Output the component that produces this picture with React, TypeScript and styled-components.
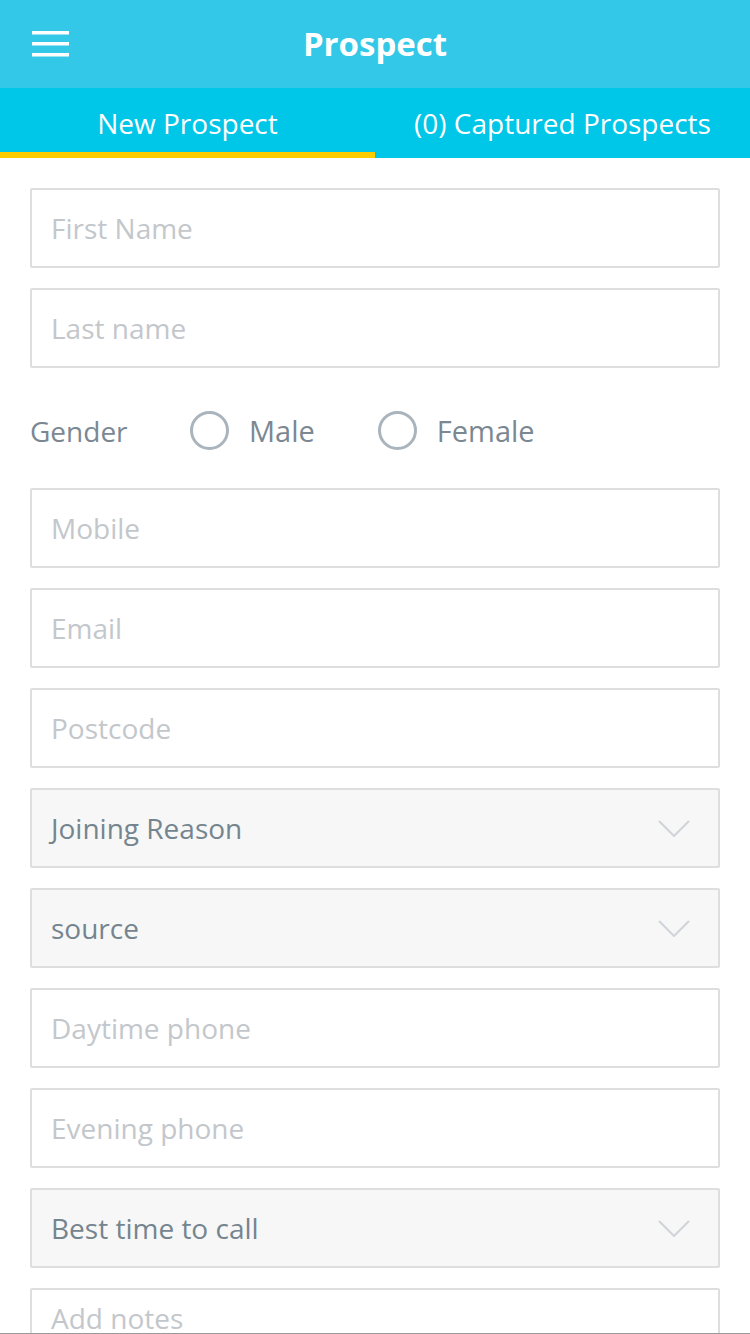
import React from "react";
import styled, { createGlobalStyle } from "styled-components";

const GlobalStyle = createGlobalStyle`
  html, body {
    margin: 0;
    padding: 0;
    background: #ffffff;
    font-family: "Open Sans", "Noto Sans", sans-serif;
  }
  * { box-sizing: border-box; }
`;

const Page = styled.div`
  width: 750px;
  height: 1334px;
  overflow: hidden;
  display: flex;
  flex-direction: column;
  background: #ffffff;
  border-bottom: 1px solid #9a9a9a;
`;

const Header = styled.header`
  height: 88px;
  flex-shrink: 0;
  background: #33c8e7;
  display: grid;
  grid-template-columns: 100px 1fr 100px;
  align-items: center;
`;

const MenuButton = styled.button`
  border: none;
  background: transparent;
  padding: 0 0 0 32px;
  height: 100%;
  display: flex;
  align-items: center;
  cursor: pointer;
`;

const Title = styled.h1`
  margin: 0;
  text-align: center;
  color: #ffffff;
  font-size: 33px;
  font-weight: 700;
  line-height: 88px;
`;

const Tabs = styled.nav`
  height: 70px;
  flex-shrink: 0;
  background: #00c6e8;
  display: grid;
  grid-template-columns: 1fr 1fr;
`;

const Tab = styled.div<{ $active?: boolean }>`
  display: flex;
  align-items: center;
  justify-content: center;
  color: #ffffff;
  font-size: 28px;
  padding-top: 6px;
  border-bottom: 6px solid ${(p) => (p.$active ? "#ffcc00" : "transparent")};
`;

const Form = styled.form`
  display: flex;
  flex-direction: column;
  gap: 20px;
  padding: 30px 30px 0;
  flex: 1;
  min-height: 0;
`;

const Field = styled.div<{ $select?: boolean }>`
  height: 80px;
  border: 2px solid #dedede;
  border-radius: 2px;
  background: ${(p) => (p.$select ? "#f7f7f7" : "#ffffff")};
  display: flex;
  align-items: center;
  justify-content: space-between;
  padding: 0 28px 0 19px;
  flex-shrink: 0;
`;

const NotesField = styled.div`
  height: 160px;
  border: 2px solid #dedede;
  border-radius: 2px;
  background: #ffffff;
  padding: 9px 19px 0;
  flex-shrink: 0;
`;

const FieldText = styled.span<{ $select?: boolean }>`
  font-size: 28px;
  line-height: 38px;
  color: ${(p) => (p.$select ? "#75858f" : "#c3c7cb")};
`;

const GenderRow = styled.div`
  height: 80px;
  display: flex;
  align-items: center;
  flex-shrink: 0;
  padding-top: 5px;
`;

const GenderLabel = styled.span`
  font-size: 28px;
  color: #7b8892;
  width: 160px;
`;

const RadioOption = styled.label`
  display: flex;
  align-items: center;
  gap: 20px;
  font-size: 29px;
  color: #7b8892;
  margin-right: 63px;
`;

const Circle = styled.span`
  width: 39px;
  height: 39px;
  border-radius: 50%;
  border: 3px solid #a9b4bc;
  display: inline-block;
`;

const Hamburger = () => (
  <svg width="37" height="26" viewBox="0 0 37 26">
    <rect x="0" y="0" width="37" height="3.5" fill="#fff" />
    <rect x="0" y="11" width="37" height="3.5" fill="#fff" />
    <rect x="0" y="22" width="37" height="3.5" fill="#fff" />
  </svg>
);

const Chevron = () => (
  <svg width="32" height="17" viewBox="0 0 32 17">
    <polyline points="1,1 16,16 31,1" fill="none" stroke="#d0d4d8" strokeWidth="2" />
  </svg>
);

type Item = { label: string; select?: boolean };

const before: Item[] = [{ label: "First Name" }, { label: "Last name" }];
const after: Item[] = [
  { label: "Mobile" },
  { label: "Email" },
  { label: "Postcode" },
  { label: "Joining Reason", select: true },
  { label: "source", select: true },
  { label: "Daytime phone" },
  { label: "Evening phone" },
  { label: "Best time to call", select: true },
];

const renderField = (f: Item) => (
  <Field key={f.label} $select={f.select}>
    <FieldText $select={f.select}>{f.label}</FieldText>
    {f.select && <Chevron />}
  </Field>
);

export default function App() {
  return (
    <Page>
      <GlobalStyle />
      <Header>
        <MenuButton type="button" aria-label="menu">
          <Hamburger />
        </MenuButton>
        <Title>Prospect</Title>
        <div />
      </Header>
      <Tabs>
        <Tab $active>New Prospect</Tab>
        <Tab>(0) Captured Prospects</Tab>
      </Tabs>
      <Form>
        {before.map(renderField)}
        <GenderRow>
          <GenderLabel>Gender</GenderLabel>
          <RadioOption>
            <Circle />
            Male
          </RadioOption>
          <RadioOption>
            <Circle />
            Female
          </RadioOption>
        </GenderRow>
        {after.map(renderField)}
        <NotesField>
          <FieldText>Add notes</FieldText>
        </NotesField>
      </Form>
    </Page>
  );
}
